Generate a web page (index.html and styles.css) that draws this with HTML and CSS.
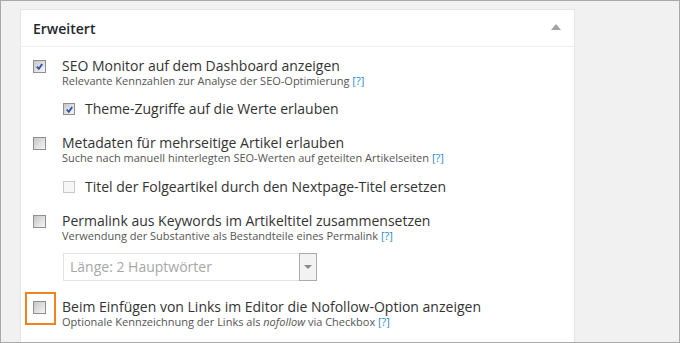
FILE: index.html
```html
<!DOCTYPE html>
<html lang="de">
<head>
	<title>Erweitert</title>
	<meta charset="utf-8" />
	<link rel="stylesheet" href="styles.css">
</head>
<body>
	<div class="screen">
		<div class="postbox">
			<div class="postbox-head">
				<h3>Erweitert</h3>
				<span class="toggle"></span>
			</div>

			<div class="postbox-body">
				<div class="option">
					<div class="option-label">
						<span class="box checked">
							<svg viewBox="0 0 10 10"><path d="M2 5.2 L4.2 7.6 L8 2.2" /></svg>
						</span>
						<span>SEO Monitor auf dem Dashboard anzeigen</span>
					</div>
					<div class="option-desc">Relevante Kennzahlen zur Analyse der SEO-Optimierung <a href="#">[?]</a></div>

					<div class="option-label sub first">
						<span class="box small checked">
							<svg viewBox="0 0 10 10"><path d="M2 5.2 L4.2 7.6 L8 2.2" /></svg>
						</span>
						<span>Theme-Zugriffe auf die Werte erlauben</span>
					</div>
				</div>

				<div class="option">
					<div class="option-label">
						<span class="box"></span>
						<span>Metadaten für mehrseitige Artikel erlauben</span>
					</div>
					<div class="option-desc">Suche nach manuell hinterlegten SEO-Werten auf geteilten Artikelseiten <a href="#">[?]</a></div>

					<div class="option-label sub">
						<span class="box small disabled"></span>
						<span>Titel der Folgeartikel durch den Nextpage-Titel ersetzen</span>
					</div>
				</div>

				<div class="option">
					<div class="option-label">
						<span class="box"></span>
						<span>Permalink aus Keywords im Artikeltitel zusammensetzen</span>
					</div>
					<div class="option-desc">Verwendung der Substantive als Bestandteile eines Permalink <a href="#">[?]</a></div>

					<div class="select">
						<span class="select-value">Länge: 2 Hauptwörter</span>
						<span class="select-arrow"></span>
					</div>
				</div>

				<div class="option last">
					<div class="option-label">
						<span class="box"></span>
						<span>Beim Einfügen von Links im Editor die Nofollow-Option anzeigen</span>
					</div>
					<div class="option-desc">Optionale Kennzeichnung der Links als <em>nofollow</em> via Checkbox <a href="#">[?]</a></div>
					<span class="highlight"></span>
				</div>
			</div>
		</div>
	</div>
</body>
</html>
```

FILE: styles.css
```css
:root {
	--text-color: #333;
	--desc-color: #555;
	--link-color: #2a8bcc;
	--border-color: #e5e5e5;
	--highlight: #f0831e;
}

* {
	box-sizing: border-box;
	margin: 0;
	padding: 0;
}

body {
	font-family: "Open Sans", "Liberation Sans", sans-serif;
	color: var(--text-color);
}

.screen {
	width: 680px;
	height: 343px;
	overflow: hidden;
	border: 1px solid #a9a9a9;
	background-color: #f1f1f1;
	padding: 8px 0 0 19px;
}

.postbox {
	width: 555px;
	height: 400px;
	background-color: #fff;
	border: 1px solid var(--border-color);
}

.postbox-head {
	height: 37px;
	border-bottom: 1px solid #eee;
	display: flex;
	align-items: center;
	justify-content: space-between;
	padding: 0 13px 0 12px;
}

h3 {
	font-size: 14px;
	font-weight: 600;
	color: #23282d;
}

.toggle {
	width: 0;
	height: 0;
	border-left: 5px solid transparent;
	border-right: 5px solid transparent;
	border-bottom: 6px solid #a0a5aa;
	margin-top: -2px;
}

.postbox-body {
	padding: 11px 0 0 12px;
}

.option {
	position: relative;
	margin-bottom: 18px;
}

.option-label {
	display: flex;
	align-items: center;
	gap: 16px;
	font-size: 14px;
	line-height: 16px;
}

.option-label.sub {
	margin: 14px 0 0 30px;
	gap: 10px;
}

.option-label.sub.first {
	margin-top: 13px;
}

.option-desc {
	font-size: 11px;
	line-height: 14px;
	color: var(--desc-color);
	padding-left: 29px;
}

.option-desc a {
	color: var(--link-color);
	text-decoration: none;
}

.box {
	width: 13px;
	height: 13px;
	flex: none;
	border: 1px solid #8e8f8f;
	background: linear-gradient(135deg, #c6c6c6, #f6f6f6);
	display: flex;
	align-items: center;
	justify-content: center;
}

.box.small {
	width: 12px;
	height: 12px;
}

.box.disabled {
	border-color: #c8c8c8;
	background: #f6f6f6;
}

.box svg {
	width: 9px;
	height: 9px;
	fill: none;
	stroke: #2a55a8;
	stroke-width: 2;
}

.select {
	width: 254px;
	height: 28px;
	margin: 10px 0 0 30px;
	display: flex;
	border: 1px solid #e3e3e3;
	border-right: none;
}

.select-value {
	flex: 1;
	padding-left: 6px;
	font-size: 14px;
	line-height: 26px;
	color: #a7a7a7;
}

.select-arrow {
	width: 18px;
	margin: -1px 0;
	border: 1px solid #ababab;
	background-color: #f2f2f2;
	display: flex;
	align-items: center;
	justify-content: center;
}

.select-arrow::after {
	content: "";
	border-left: 4px solid transparent;
	border-right: 4px solid transparent;
	border-top: 4px solid #8a8a8a;
}

.highlight {
	position: absolute;
	left: -8px;
	top: -7px;
	width: 31px;
	height: 33px;
	border: 2px solid var(--highlight);
}
```
